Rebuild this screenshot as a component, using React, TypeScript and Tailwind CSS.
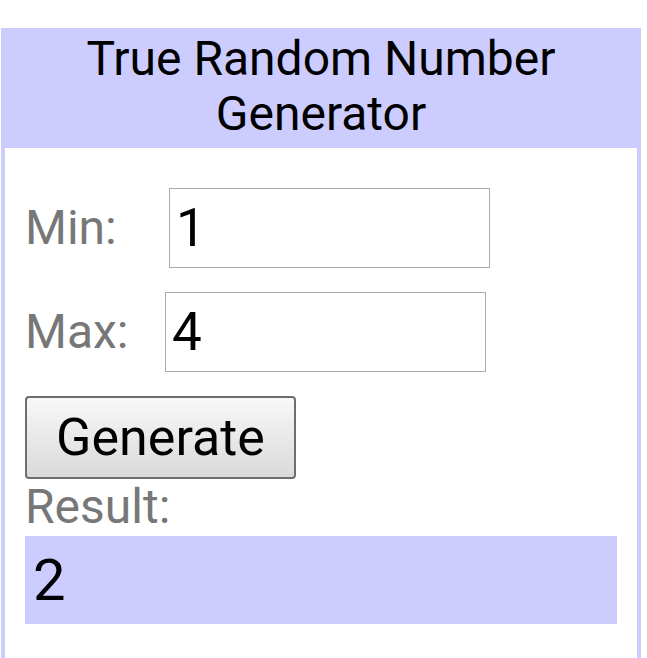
import { useState } from "react"

export default function App() {
    const [min, setMin] = useState("1")
    const [max, setMax] = useState("4")
    const [result, setResult] = useState("2")

    const generate = () => {
        const lo = parseInt(min, 10)
        const hi = parseInt(max, 10)
        if (isNaN(lo) || isNaN(hi) || hi < lo) return
        setResult(String(lo + Math.floor(Math.random() * (hi - lo + 1))))
    }

    return (
        <div className="min-h-[658px] bg-white pt-[28px] font-[Roboto,sans-serif]">
            <div className="ml-px w-[640px] bg-[#ccccff] px-1">
                {/* Titel */}
                <div className="h-[120px] pt-[3px] text-center text-[48px] leading-[55px] text-black">
                    True Random Number
                    <br />
                    Generator
                </div>

                {/* Formular */}
                <div className="bg-white px-5 pt-10 pb-12">
                    <div className="flex h-[80px] items-center">
                        <span className="w-[144px] text-[48px] text-[#777]">Min:</span>
                        <input
                            value={min}
                            onChange={(e) => setMin(e.target.value)}
                            className="h-[80px] w-[321px] border border-[#aaa] px-[6px] text-[53px] text-black outline-none"
                        />
                    </div>

                    <div className="mt-6 flex h-[80px] items-center">
                        <span className="w-[140px] text-[48px] text-[#777]">Max:</span>
                        <input
                            value={max}
                            onChange={(e) => setMax(e.target.value)}
                            className="h-[80px] w-[321px] border border-[#aaa] px-[6px] text-[53px] text-black outline-none"
                        />
                    </div>

                    <button
                        onClick={generate}
                        className="mt-6 h-[83px] w-[271px] rounded-[4px] border-2 border-[#6e6e6e] bg-gradient-to-b from-[#f8f8f8] to-[#dadada] text-[52px] leading-none text-black"
                    >
                        Generate
                    </button>

                    <div className="mt-1 h-[48px] text-[48px] leading-[48px] text-[#777]">Result:</div>

                    <div className="mt-[5px] h-[88px] bg-[#ccccff] pl-2 text-[58px] leading-[88px] text-black">
                        {result}
                    </div>
                </div>
            </div>
        </div>
    )
}
